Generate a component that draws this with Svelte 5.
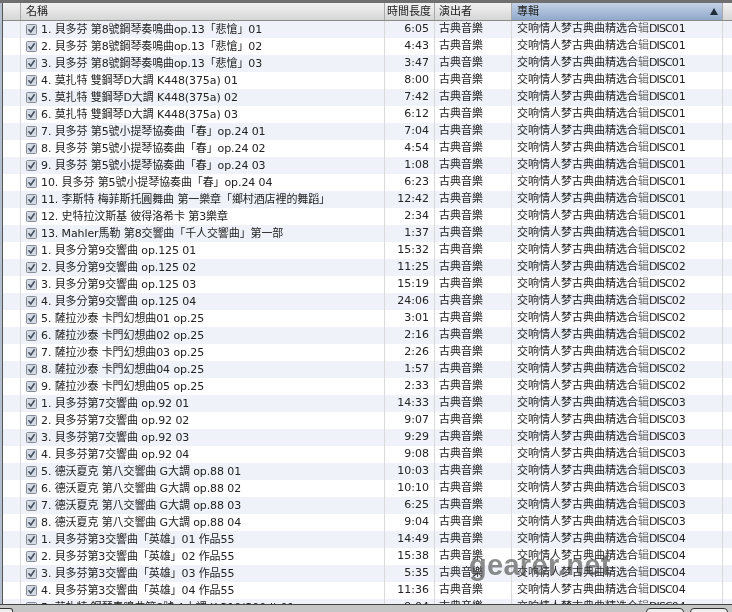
<script>
  const raw = [
    ['1. 貝多芬 第8號鋼琴奏鳴曲op.13「悲愴」01','6:05',1],
    ['2. 貝多芬 第8號鋼琴奏鳴曲op.13「悲愴」02','4:43',1],
    ['3. 貝多芬 第8號鋼琴奏鳴曲op.13「悲愴」03','3:47',1],
    ['4. 莫扎特 雙鋼琴D大調 K448(375a) 01','8:00',1],
    ['5. 莫扎特 雙鋼琴D大調 K448(375a) 02','7:42',1],
    ['6. 莫扎特 雙鋼琴D大調 K448(375a) 03','6:12',1],
    ['7. 貝多芬 第5號小提琴協奏曲「春」op.24 01','7:04',1],
    ['8. 貝多芬 第5號小提琴協奏曲「春」op.24 02','4:54',1],
    ['9. 貝多芬 第5號小提琴協奏曲「春」op.24 03','1:08',1],
    ['10. 貝多芬 第5號小提琴協奏曲「春」op.24 04','6:23',1],
    ['11. 李斯特 梅菲斯托圓舞曲 第一樂章「鄉村酒店裡的舞蹈」','12:42',1],
    ['12. 史特拉汶斯基 彼得洛希卡 第3樂章','2:34',1],
    ['13. Mahler馬勒 第8交響曲「千人交響曲」第一部','1:37',1],
    ['1. 貝多分第9交響曲 op.125 01','15:32',2],
    ['2. 貝多分第9交響曲 op.125 02','11:25',2],
    ['3. 貝多分第9交響曲 op.125 03','15:19',2],
    ['4. 貝多分第9交響曲 op.125 04','24:06',2],
    ['5. 薩拉沙泰 卡門幻想曲01 op.25','3:01',2],
    ['6. 薩拉沙泰 卡門幻想曲02 op.25','2:16',2],
    ['7. 薩拉沙泰 卡門幻想曲03 op.25','2:26',2],
    ['8. 薩拉沙泰 卡門幻想曲04 op.25','1:57',2],
    ['9. 薩拉沙泰 卡門幻想曲05 op.25','2:33',2],
    ['1. 貝多芬第7交響曲 op.92 01','14:33',3],
    ['2. 貝多芬第7交響曲 op.92 02','9:07',3],
    ['3. 貝多芬第7交響曲 op.92 03','9:29',3],
    ['4. 貝多芬第7交響曲 op.92 04','9:08',3],
    ['5. 德沃夏克 第八交響曲 G大調 op.88 01','10:03',3],
    ['6. 德沃夏克 第八交響曲 G大調 op.88 02','10:10',3],
    ['7. 德沃夏克 第八交響曲 G大調 op.88 03','6:25',3],
    ['8. 德沃夏克 第八交響曲 G大調 op.88 04','9:04',3],
    ['1. 貝多芬第3交響曲「英雄」01 作品55','14:49',4],
    ['2. 貝多芬第3交響曲「英雄」02 作品55','15:38',4],
    ['3. 貝多芬第3交響曲「英雄」03 作品55','5:35',4],
    ['4. 貝多芬第3交響曲「英雄」04 作品55','11:36',4],
    ['5. 莫扎特 鋼琴奏鳴曲第8號 A小調 K.310(300d) 01','9:04',4],
  ];
</script>

<div class="window">
  <div class="topbar"></div>
  <div class="main">
    <div class="strip"></div>
    <div class="list">
      <div class="cols head">
        <div class="hc"></div>
        <div class="hc name">名稱</div>
        <div class="hc tight">時間長度</div>
        <div class="hc mid">演出者</div>
        <div class="hc sel"><span>專輯</span><i class="arrow"></i></div>
        <div class="hc end"></div>
      </div>
      <div class="rows">
        {#each raw as r, i}
          <div class="cols row" class:alt={i % 2 === 0}>
            <div class="c"></div>
            <div class="c name">
              <svg class="check" width="11" height="11" viewBox="0 0 11 11">
                <rect x="0.5" y="0.5" width="10" height="10" rx="1" fill="#d5dbe4" stroke="#858c96" />
                <path d="M2.5 5.2 L4.8 8 L8.6 2.2" fill="none" stroke="#46505f" stroke-width="1.6" />
              </svg>
              <span class="title">{r[0]}</span>
            </div>
            <div class="c time">{r[1]}</div>
            <div class="c mid">古典音樂</div>
            <div class="c album">交响情人梦古典曲精选合<span class="faint">辑</span><span class="disc">DISC</span>0{r[2]}</div>
            <div class="c"></div>
          </div>
        {/each}
      </div>
      <div class="mark">gearer.net</div>
    </div>
  </div>
  <div class="bottom">
    <div class="tab"></div>
    <div class="btns"><div class="btn"></div><div class="btn"></div></div>
  </div>
</div>

<style>
  :global(body) { margin: 0; }
  .window {
    width: 732px; height: 612px; overflow: hidden; display: flex; flex-direction: column;
    font-family: "DejaVu Sans", "Noto Sans CJK TC", sans-serif; font-size: 11px; color: #222;
    background: #fff; filter: blur(0.4px);
  }
  .topbar { height: 3px; flex: none; background: #6f6f6f; }
  .main { flex: 1; min-height: 0; display: flex; }
  .strip { width: 2px; flex: none; background: #b4bfd0; border-right: 1px solid #555; }
  .list { flex: 1; min-width: 0; position: relative; overflow: hidden; display: flex; flex-direction: column; }
  .cols { display: grid; grid-template-columns: 18px 364px 50px 77px 211px 1fr; }
  .head { height: 18px; flex: none; border-bottom: 1px solid #8a8a8a; box-sizing: border-box; background: linear-gradient(#f2f2f2, #d6d6d6); }
  .hc { border-right: 1px solid #a9a9a9; padding: 0 5px; display: flex; align-items: center; line-height: 17px; color: #222; white-space: nowrap; overflow: hidden; min-width: 0; }
  .hc.tight { padding: 0 2px; }
  .hc.mid { padding: 0 4px; }
  .hc.sel { background: linear-gradient(#c4d2e6, #8fa9cb); justify-content: space-between; padding-right: 4px; }
  .hc.end { border-right: 0; }
  .arrow { width: 0; height: 0; border-left: 4px solid transparent; border-right: 4px solid transparent; border-bottom: 7px solid #1f2a3a; }
  .rows { flex: 1; min-height: 0; overflow: hidden; }
  .row { height: 17px; line-height: 16px; }
  .row.alt { background: #eff3f9; }
  .c { border-right: 1px solid #d9d9d9; padding: 0 5px; white-space: nowrap; overflow: hidden; min-width: 0; }
  .c.mid { padding: 0 4px; }
  .c.name { display: flex; align-items: center; gap: 4px; padding-left: 5px; }
  .title { letter-spacing: -0.1px; }
  .check { flex: none; }
  .time { text-align: right; padding-right: 5px; }
  .album { padding-left: 5px; }
  .faint { color: #666; }
  .disc { letter-spacing: -0.9px; }
  .mark {
    position: absolute; left: 466px; top: 546px; font: bold 29px "Liberation Sans", sans-serif; letter-spacing: 0.3px;
    color: rgba(70, 70, 70, 0.62); white-space: nowrap; filter: blur(0.7px);
  }
  .bottom { height: 8px; flex: none; border-top: 1px solid #444; background: #c6c6c6; display: flex; justify-content: space-between; box-sizing: border-box; padding-top: 3px; }
  .tab { width: 13px; height: 10px; border: 1px solid #333; border-left: 0; border-radius: 0 3px 0 0; background: #efefef; box-sizing: border-box; }
  .btns { display: flex; gap: 6px; padding-right: 4px; }
  .btn { width: 38px; height: 10px; border: 1px solid #333; border-radius: 4px 4px 0 0; background: #efefef; box-sizing: border-box; }
</style>
